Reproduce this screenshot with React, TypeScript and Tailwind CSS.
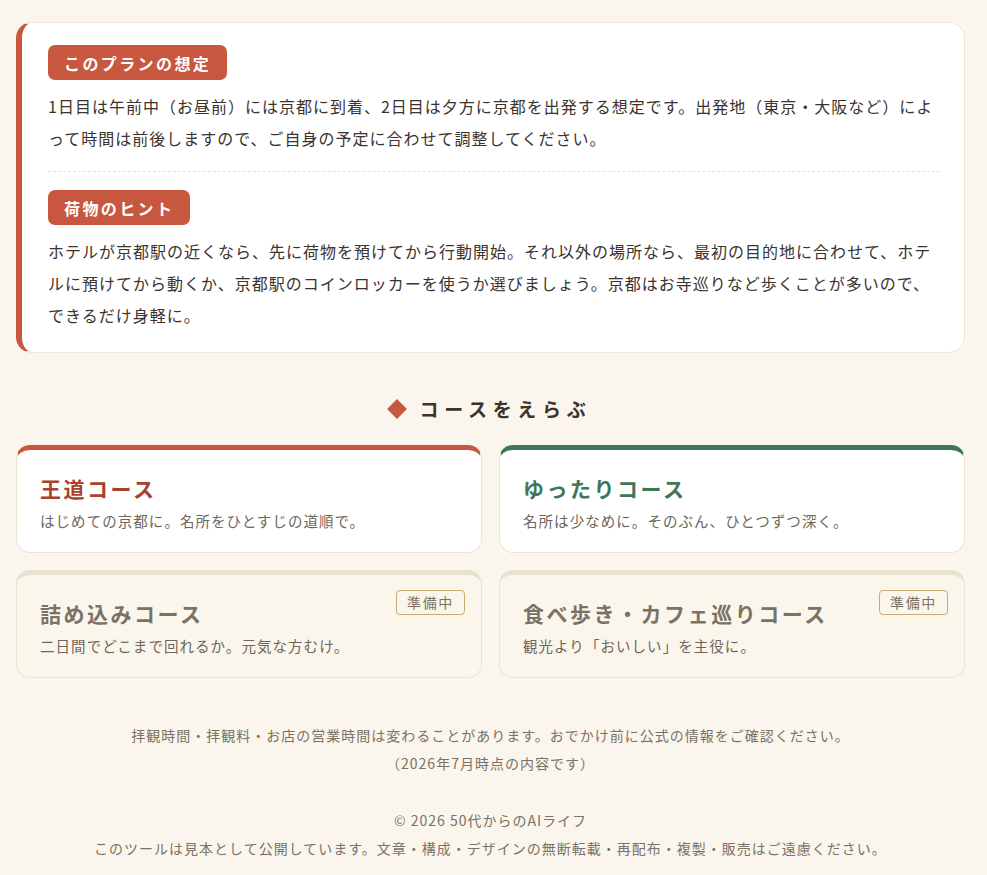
import React from 'react';

const sans = "font-['Noto_Sans_CJK_JP','Noto_Sans',sans-serif]";

type Course = {
  title: string;
  desc: string;
  accent: 'red' | 'green' | 'none';
  ready: boolean;
};

const courses: Course[] = [
  { title: '王道コース', desc: 'はじめての京都に。名所をひとすじの道順で。', accent: 'red', ready: true },
  { title: 'ゆったりコース', desc: '名所は少なめに。そのぶん、ひとつずつ深く。', accent: 'green', ready: true },
  { title: '詰め込みコース', desc: '二日間でどこまで回れるか。元気な方むけ。', accent: 'none', ready: false },
  { title: '食べ歩き・カフェ巡りコース', desc: '観光より「おいしい」を主役に。', accent: 'none', ready: false },
];

const Tag: React.FC<{ children: React.ReactNode }> = ({ children }) => (
  <span className="inline-flex h-[35px] items-center rounded-[7px] bg-[#c8573f] px-4 text-[16px] font-bold tracking-[0.15em] text-white">
    {children}
  </span>
);

const CourseCard: React.FC<{ course: Course }> = ({ course }) => {
  const topBorder =
    course.accent === 'red'
      ? 'border-t-[#c8573f]'
      : course.accent === 'green'
        ? 'border-t-[#3f7656]'
        : 'border-t-[#e9e2d0]';
  const titleColor =
    course.accent === 'red' ? 'text-[#a8412f]' : course.accent === 'green' ? 'text-[#3f7656]' : 'text-[#7b7164]';

  return (
    <div
      className={`relative rounded-[14px] border-[1.5px] border-t-[5px] border-[#ece4d3] ${topBorder} ${
        course.ready ? 'bg-white' : 'bg-[#faf6ec]'
      } pt-[22px] pr-6 pb-[19px] pl-[23px]`}
    >
      <h3 className={`text-[21px] leading-[32px] font-bold tracking-[0.12em] ${titleColor}`}>{course.title}</h3>
      <p className="mt-[5px] text-[14.5px] leading-[24px] tracking-[1.05px] text-[#6e655b]">{course.desc}</p>
      {!course.ready && (
        <span className="absolute top-[15px] right-4 inline-flex h-[25px] items-center rounded-[4px] border border-[#cda874] px-[10px] text-[14px] tracking-[0.12em] text-[#7b7164]">
          準備中
        </span>
      )}
    </div>
  );
};

export default function App() {
  return (
    <div className={`min-h-screen bg-[#faf6ed] ${sans} text-[#3b332e]`}>
      <div className="pt-[22px] pr-[22px] pb-3 pl-4">
        {/* plan notes */}
        <section className="rounded-[16px] border border-l-[6px] border-[#eee7d8] border-l-[#c8573f] bg-white pt-[22px] pr-6 pb-[21px] pl-[26px]">
          <div className="border-b border-dashed border-[#e9e2d4] pb-[17px]">
            <Tag>このプランの想定</Tag>
            <p className="mt-[10px] text-[16px] leading-[32px] tracking-[1px]">
              1日目は午前中（お昼前）には京都に到着、2日目は夕方に京都を出発する想定です。出発地（東京・大阪など）によって時間は前後しますので、ご自身の予定に合わせて調整してください。
            </p>
          </div>
          <div className="pt-[18px]">
            <Tag>荷物のヒント</Tag>
            <p className="mt-[10px] text-[16px] leading-[32px] tracking-[1px]">
              ホテルが京都駅の近くなら、先に荷物を預けてから行動開始。それ以外の場所なら、最初の目的地に合わせて、ホテルに預けてから動くか、京都駅のコインロッカーを使うか選びましょう。京都はお寺巡りなど歩くことが多いので、できるだけ身軽に。
            </p>
          </div>
        </section>

        {/* course picker */}
        <h2 className="mt-[42px] mb-[22px] flex items-center justify-center gap-[16px] text-[19px] leading-[28px] font-bold tracking-[0.3em] text-[#3b332e]">
          <span className="h-[14px] w-[14px] rotate-45 bg-[#c8573f]" />
          <span>コースをえらぶ</span>
        </h2>

        <div className="grid grid-cols-2 gap-x-[17px] gap-y-[17px]">
          {courses.map((c) => (
            <CourseCard key={c.title} course={c} />
          ))}
        </div>

        <footer className="mt-[43px] text-center text-[14px] leading-[28px] tracking-[1px] text-[#7b7164]">
          <p>拝観時間・拝観料・お店の営業時間は変わることがあります。おでかけ前に公式の情報をご確認ください。</p>
          <p>（2026年7月時点の内容です）</p>
          <p className="mt-[29px]">© 2026 50代からのAIライフ</p>
          <p>このツールは見本として公開しています。文章・構成・デザインの無断転載・再配布・複製・販売はご遠慮ください。</p>
        </footer>
      </div>
    </div>
  );
}
